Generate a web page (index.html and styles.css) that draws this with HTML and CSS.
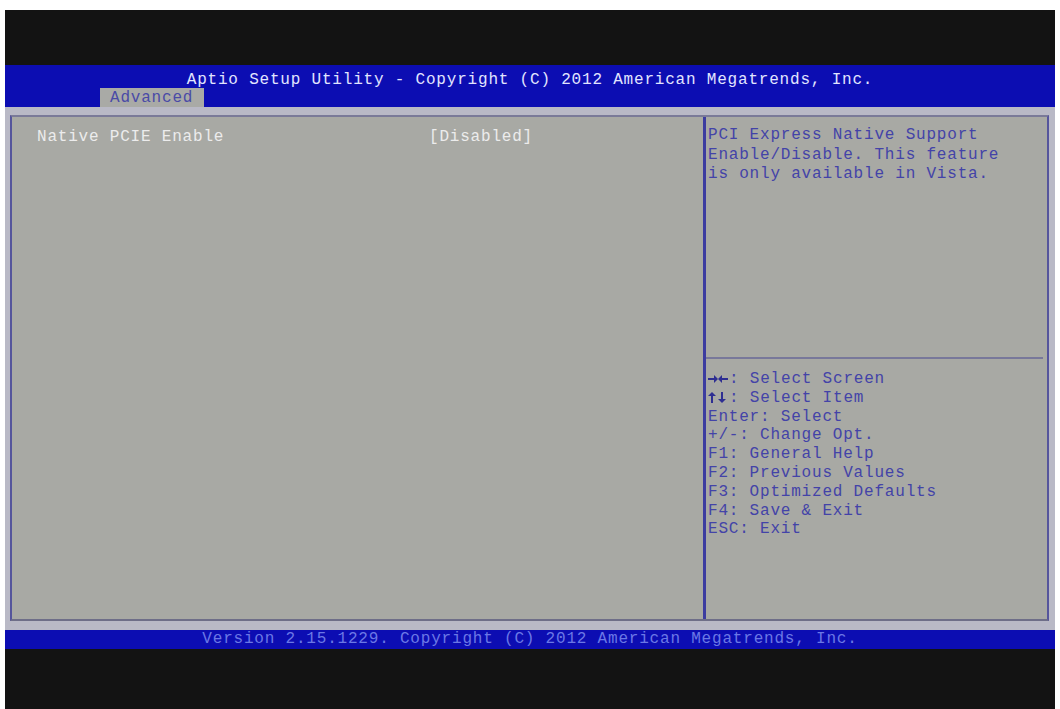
FILE: index.html
```html
<!DOCTYPE html>
<html lang="en">
<head>
    <meta charset="UTF-8">
    <meta name="viewport" content="width=device-width, initial-scale=1.0">
    <title>Aptio Setup Utility - Advanced</title>
    <link rel="stylesheet" href="styles.css">
</head>
<body>
    <div class="screen">
        <div class="top-black"></div>

        <!-- header with title and tab -->
        <div class="title-bar">
            <div class="title">Aptio Setup Utility - Copyright (C) 2012 American Megatrends, Inc.</div>
            <div class="tabs">
                <span class="tab">Advanced</span>
            </div>
        </div>

        <div class="main">
            <div class="frame">
                <div class="items">
                    <div class="item">
                        <span class="item-name">Native PCIE Enable</span>
                        <span class="item-value">[Disabled]</span>
                    </div>
                </div>
                <div class="side">
                    <div class="help">
                        <div>PCI Express Native Support</div>
                        <div>Enable/Disable. This feature</div>
                        <div>is only available in Vista.</div>
                    </div>
                    <div class="keys">
                        <div><svg class="arrows" width="20" height="10" viewBox="0 0 20 10"><path d="M0 4h6V1l4 4-4 4V6H0z M20 4h-6V1l-4 4 4 4V6h6z"/></svg>: Select Screen</div>
                        <div><svg class="arrows" width="20" height="11" viewBox="0 0 20 11"><path d="M4 0l4 4H5v7H3V4H0z M14 11l4-4h-3V0h-2v7h-3z"/></svg>: Select Item</div>
                        <div>Enter: Select</div>
                        <div>+/-: Change Opt.</div>
                        <div>F1: General Help</div>
                        <div>F2: Previous Values</div>
                        <div>F3: Optimized Defaults</div>
                        <div>F4: Save &amp; Exit</div>
                        <div>ESC: Exit</div>
                    </div>
                </div>
            </div>
        </div>

        <div class="footer">Version 2.15.1229. Copyright (C) 2012 American Megatrends, Inc.</div>
        <div class="bottom-black"></div>
    </div>
</body>
</html>
```

FILE: styles.css
```css
body {
    margin: 0;
    padding: 0;
    background-color: #ffffff;
    font-family: "Liberation Mono", "DejaVu Sans Mono", monospace;
    font-size: 16px;
    letter-spacing: 0.8px;
}
.screen {
    margin: 10px 5px 0 5px;
    width: 1050px;
    height: 699px;
    background-color: #131313;
    display: flex;
    flex-direction: column;
}
.top-black {
    height: 55px;
}
.title-bar {
    height: 42px;
    background-color: #0c0db2;
    display: flex;
    flex-direction: column;
}
.title {
    padding-top: 6px;
    height: 19px;
    line-height: 19px;
    text-align: center;
    color: #e2e5ff;
}
.tabs {
    margin-top: -2px;
    padding-left: 95px;
    height: 19px;
}
.tab {
    display: inline-block;
    height: 19px;
    line-height: 20px;
    padding: 0 11px 0 10px;
    background-color: #a9aaa6;
    color: #4a4aa6;
}
.main {
    height: 506px;
    padding: 8px 6px 9px 5px;
    background-color: #b9b9c6;
    display: flex;
}
.frame {
    flex: 1;
    display: flex;
    border: 2px solid #55559c;
    border-top-color: #7a7a98;
    border-bottom-color: #6e6e88;
    background-color: #a8a9a4;
}
.items {
    width: 666px;
    padding: 11px 0 0 25px;
    border-right: 3px solid #3c3ca0;
}
.item {
    display: flex;
    line-height: 19px;
}
.item-name {
    width: 392px;
    color: #ececec;
}
.item-value {
    color: #ececec;
}
.side {
    flex: 1;
    display: flex;
    flex-direction: column;
}
.help {
    height: 231px;
    padding: 9px 0 0 2px;
    line-height: 19.5px;
    color: #4343a8;
    border-bottom: 2px solid #78789a;
    margin-right: 4px;
}
.keys {
    padding: 11px 0 0 2px;
    line-height: 18.8px;
    color: #4343a8;
}
.keys div {
    height: 18.8px;
}
.arrows {
    fill: #2e2e92;
    vertical-align: -1px;
    margin-right: 1px;
}
.footer {
    height: 19px;
    line-height: 19px;
    text-align: center;
    background-color: #0c0db2;
    color: #6b78e6;
}
.bottom-black {
    flex: 1;
}
```
